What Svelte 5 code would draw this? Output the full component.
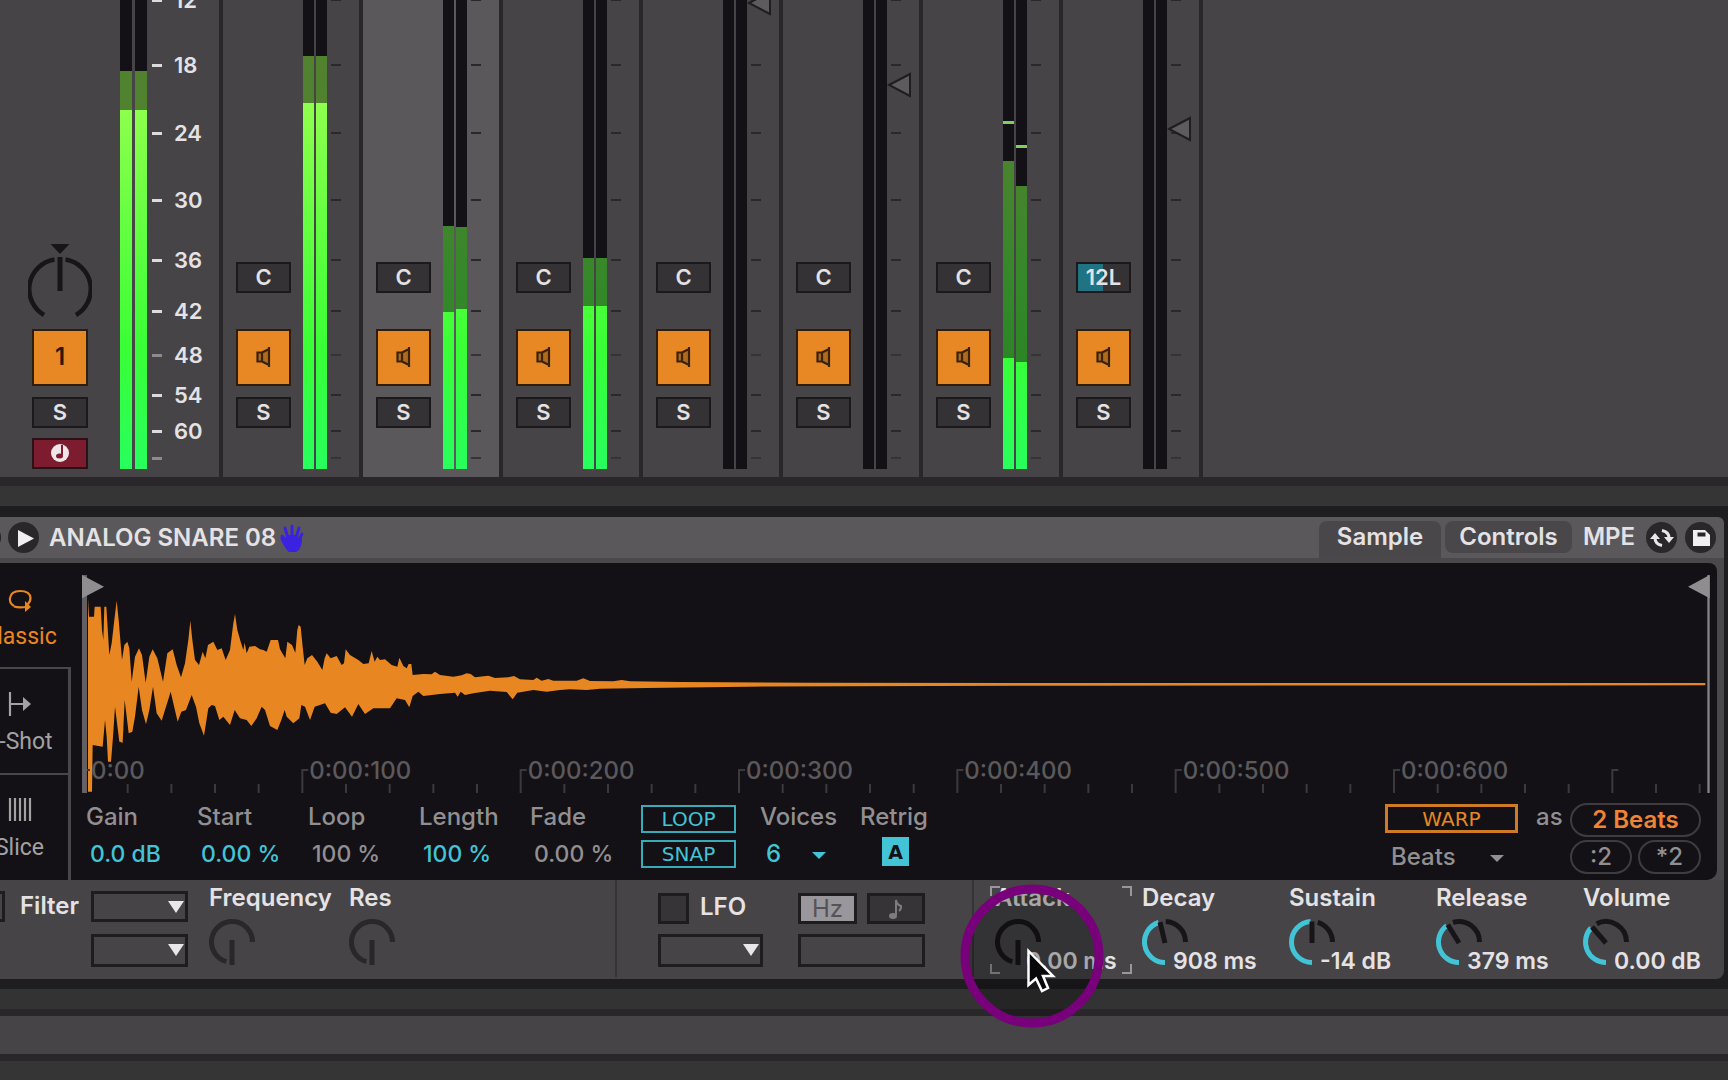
<script>
  const scale = [
    { db: '12', span: 65 },
    { db: '18', span: 68 },
    { db: '24', span: 67 },
    { db: '30', span: 60 },
    { db: '36', span: 51 },
    { db: '42', span: 44 },
    { db: '48', span: 40, soft: true },
    { db: '54', span: 36 },
    { db: '60', span: 27 },
    { db: '', span: 19, soft: true }
  ];

  // Each bar lists where its peak, its held level and its live level begin.
  const off = { peak: null, hold: 469, live: 469 };
  const mainBars = [
    { peak: null, hold: 71, live: 110 },
    { peak: null, hold: 71, live: 110 }
  ];
  const tracks = [
    { pan: 'C', bars: [{ hold: 56, live: 103 }, { hold: 56, live: 103 }] },
    { pan: 'C', selected: true, bars: [{ hold: 226, live: 312 }, { hold: 227, live: 309 }] },
    { pan: 'C', bars: [{ hold: 258, live: 306 }, { hold: 258, live: 306 }] },
    { pan: 'C', bars: [off, off], fader: 3 },
    { pan: 'C', bars: [off, off], fader: 85 },
    { pan: 'C', bars: [{ peak: 121, hold: 161, live: 358 }, { peak: 145, hold: 186, live: 362 }] },
    { pan: '12L', bars: [off, off], fader: 129 }
  ];

  const params = [
    { name: 'Gain', value: '0.0 dB', on: true },
    { name: 'Start', value: '0.00 %', on: true },
    { name: 'Loop', value: '100 %' },
    { name: 'Length', value: '100 %', on: true },
    { name: 'Fade', value: '0.00 %' }
  ];

  const dials = [
    { name: 'Attack', value: '0.00 ms', angle: -180, focus: true },
    { name: 'Decay', value: '908 ms', angle: -14 },
    { name: 'Sustain', value: '-14 dB', angle: 0 },
    { name: 'Release', value: '379 ms', angle: -33 },
    { name: 'Volume', value: '0.00 dB', angle: -43 }
  ];

  const times = ['0:00', '0:00:100', '0:00:200', '0:00:300', '0:00:400', '0:00:500', '0:00:600'];
  const ticks = Array.from({ length: 38 }, (_, i) => ({ x: 12 + i * 131, major: i % 5 === 0 }));

  const upper =
    '24,25 27,80 42,80 44,50 62,50 66,120 70,150 73,50 79,50 88,195 95,160 103,90 110,32 116,90 126,210 133,165 142,155 148,175 155,275 165,200 177,175 186,195 197,278 208,200 218,178 232,205 249,275 262,190 278,178 290,225 303,262 315,220 325,150 331,92 337,150 345,210 357,225 368,185 376,205 384,165 400,155 412,180 425,175 437,210 450,180 460,100 465,72 472,120 482,155 490,180 494,158 500,190 508,170 525,168 540,178 550,180 560,185 572,150 594,150 600,178 616,205 622,155 636,165 646,188 652,120 656,105 662,110 668,170 674,225 682,205 696,195 712,215 727,240 734,205 740,190 752,205 770,198 785,225 792,220 797,178 810,195 835,210 850,222 866,220 875,183 884,215 892,200 900,210 915,208 935,225 952,230 958,203 970,228 980,235 986,222 994,222 998,255 1030,252 1055,253 1065,245 1080,255 1120,260 1145,256 1160,250 1172,252 1185,262 1225,257 1245,264 1285,262 1302,258 1320,268 1360,270 1370,263 1385,272 1405,267 1420,272 1490,272 1510,265 1530,273 1600,274 1625,270 1650,274 1800,276 2200,278 3000,279 4876,279';
  const lower =
    '24,605 36,605 38,465 68,470 75,390 80,440 84,515 93,515 99,440 105,350 118,455 128,458 134,330 146,430 157,425 165,380 176,290 186,360 198,403 208,360 219,290 230,370 245,392 258,350 272,305 280,340 293,395 304,365 318,360 335,315 348,350 358,400 372,437 385,355 395,345 405,348 418,390 430,380 450,405 464,360 480,385 500,390 514,408 530,385 545,350 555,360 570,408 592,420 604,390 614,360 620,380 640,400 658,385 664,345 675,350 690,390 704,350 735,340 752,368 770,372 795,352 816,380 835,342 855,372 880,355 930,355 950,325 975,330 988,352 998,318 1015,305 1030,318 1080,312 1125,308 1133,320 1142,305 1155,315 1180,310 1230,302 1280,306 1298,328 1312,308 1360,300 1400,305 1440,300 1470,298 1520,300 1560,296 1700,294 2000,290 3000,287 4876,286';
  const wave = upper + ' ' + lower.split(' ').reverse().join(' ');

  const rim = (deg) => {
    const a = (deg * Math.PI) / 180;
    return `${(24 + 20.5 * Math.sin(a)).toFixed(2)} ${(24 - 20.5 * Math.cos(a)).toFixed(2)}`;
  };
  const arc = (from, to) => `M${rim(from)}A20.5 20.5 0 ${to - from > 180 ? 1 : 0} 1 ${rim(to)}`;
</script>

{#snippet meter(bars)}
  <div class="meter">
    {#each bars as b}
      <div class="bar">
        {#if b.peak}<i class="peak" style:top="{b.peak}px"></i>{/if}
        <i class="hold" style:height="{b.live - b.hold}px" style:background-position-y="{-b.hold}px"></i>
        <i class="live" style:height="{469 - b.live}px"></i>
      </div>
    {/each}
  </div>
{/snippet}

{#snippet ruler(labels)}
  <ul class="scale" class:labels>
    {#each scale as s}
      <li style:height="{s.span}px"><i class:soft={s.soft}></i>{#if labels}<span>{s.db}</span>{/if}</li>
    {/each}
  </ul>
{/snippet}

{#snippet knob(angle, faint)}
  <svg class="knob" class:faint viewBox="0 0 48 48" aria-hidden="true">
    {#if angle === -180}
      <path d={arc(-164, 90)} />
      <path d="M24 22V47" />
    {:else}
      <path d={arc(angle + 16, 90)} />
      <path class="lit" d={arc(-180, angle - 4)} />
      <path d="M24 25L{rim(angle)}" />
    {/if}
  </svg>
{/snippet}

<main>
  <section class="mixer" aria-label="Mixer">
    <div class="strip main">
      <div class="buttons">
        <svg class="pan-dial" viewBox="0 0 64 80" aria-hidden="true">
          <path d="M22.500 4H41.500L32 14Z" fill="#171519" />
          <path d="M16 75A30 30 0 0 1 26.500 19.500M37.500 19.500A30 30 0 0 1 48 75" fill="none" stroke="#171519" stroke-width="4.500" />
          <path d="M32 17V51" stroke="#171519" stroke-width="5" />
        </svg>
        <button class="active">1</button>
        <button class="solo">S</button>
        <button class="arm" aria-label="Record arm">
          <svg viewBox="0 0 20 20"><circle cx="10" cy="10" r="9" fill="#efe6e8" /><path d="M12 2V12" stroke="#7d1c2e" stroke-width="2" /><ellipse cx="9.500" cy="13" rx="3.500" ry="2.500" fill="#7d1c2e" /></svg>
        </button>
      </div>
      {@render meter(mainBars)}
      {@render ruler(true)}
    </div>
    {#each tracks as t}
      <div class="strip" class:selected={t.selected}>
        <div class="buttons">
          <button class="pan" class:left={t.pan !== 'C'}>{t.pan}</button>
          <button class="active" aria-label="Track on">
            <svg viewBox="0 0 20 22"><path d="M3 6.500H8L15 2V20L8 15.500H3Z" fill="#b06a1e" /><path d="M8 6.500H3.500V15.500H8ZM8 6.500V15.500M8 6.500L14 3.500M8 15.500L14 18.500M15 1V21" fill="none" stroke="#3a2208" stroke-width="2.200" /></svg>
          </button>
          <button class="solo">S</button>
        </div>
        {@render meter(t.bars)}
        {@render ruler(false)}
        {#if t.fader}
          <svg class="fader" style:top="{t.fader - 14}px" viewBox="0 0 26 28" aria-hidden="true"><path d="M2 14L23 3V25Z" fill="#5d5b5e" stroke="#1f1d20" stroke-width="2" /></svg>
        {/if}
      </div>
    {/each}
    <div class="empty"></div>
  </section>

  <div class="divider"></div>

  <section class="device" aria-label="Simpler">
    <header>
      <span class="dot"></span>
      <button class="round" aria-label="Play"><svg viewBox="0 0 32 32"><path d="M10 8V25L26 16.500Z" fill="#f1f0f1" /></svg></button>
      <h1>ANALOG SNARE 08</h1>
      <svg class="hand" viewBox="0 0 26 30" aria-hidden="true"><path d="M7 17L3 13M9 15L6 5M13 14V3M17 15L20 5M19 18L23 11" stroke="#3a22e0" stroke-width="3" stroke-linecap="round" /><path d="M1 15Q4 13 7 17L8 12H18L20 16L23 12L23 19Q21 28 17 29H10Q6 26 1 15Z" fill="#3a22e0" /></svg>
      <nav>
        <button class="tab current">Sample</button>
        <button class="tab">Controls</button>
        <button class="tab plain">MPE</button>
      </nav>
      <button class="round swap" aria-label="Hot-swap"><svg viewBox="0 0 32 32"><path d="M9 16Q9 22 16 23.500M23 16Q23 10 16 8.500" fill="none" stroke="#e9e8e9" stroke-width="3" /><path d="M4 17L9 11L14 17ZM18 15L23 21L28 15Z" fill="#e9e8e9" /></svg></button>
      <button class="round" aria-label="Save preset"><svg viewBox="0 0 32 32"><path d="M8 8H20L25 13V24H8Z" fill="#f1f0f1" /><path d="M12.500 10.500H20.500V14.500H12.500Z" fill="#29272a" /></svg></button>
    </header>

    <div class="sampler">
      <div class="modes">
        <button class="mode chosen">
          <svg viewBox="0 0 26 26"><path d="M7 19Q2 16 3 11Q4 4 13 4Q23 4 23.500 11Q23.500 15 20 18M7 19.500Q11 21 20 20" fill="none" stroke="currentColor" stroke-width="2.200" /><path d="M18 14L24 20L18 25Z" fill="currentColor" /></svg>
          Classic
        </button>
        <button class="mode">
          <svg viewBox="0 0 26 26"><path d="M3 1V25M3 13H18" stroke="currentColor" stroke-width="2.200" /><path d="M16 6L24 13L16 20Z" fill="currentColor" /></svg>
          1-Shot
        </button>
        <button class="mode">
          <svg viewBox="0 0 26 26"><path d="M3 1V24M8 1V24M13 1V24M18 1V24M23 1V24" stroke="currentColor" stroke-width="2.200" /></svg>
          Slice
        </button>
      </div>

      <div class="editor">
        <div class="scope">
          <svg class="wave" viewBox="6 -45 4884 654" preserveAspectRatio="none" aria-hidden="true">
            <polygon points={wave} fill="#e88722" />
            {#each ticks as t}
              <path d={t.major ? `M${t.x} 609V540H${t.x + 18}` : `M${t.x} 609V582`} fill="none" stroke="#3b393c" stroke-width="6" />
            {/each}
            <path d="M6 -45H21V609H6Z" fill="#6a686b" fill-opacity="0.9" />
            <path d="M6 -45L72 -10L6 25Z" fill="#8f8d90" />
            <path d="M4882 -45H4889V609H4882Z" fill="#858386" />
            <path d="M4889 -45L4824 -10L4889 25Z" fill="#8f8d90" />
          </svg>
          <ol class="times">
            {#each times as t}<li>{t}</li>{/each}
          </ol>
        </div>

        <div class="controls">
          {#each params as p}
            <label class="param">{p.name}<input class:on={p.on} value={p.value} /></label>
          {/each}
          <div class="toggles">
            <button>LOOP</button>
            <button>SNAP</button>
          </div>
          <label class="param voices">Voices
            <span class="menu on"><select><option>6</option></select></span>
          </label>
          <div class="param retrig"><span>Retrig</span><button aria-label="Retrigger">A</button></div>
          <div class="warp">
            <button class="warp-on">WARP</button>
            <span class="menu"><select aria-label="Warp mode"><option>Beats</option></select></span>
          </div>
          <span class="as">as</span>
          <div class="lengths">
            <button class="beats">2 Beats</button>
            <button>:2</button>
            <button>*2</button>
          </div>
        </div>
      </div>
    </div>

    <div class="lower">
      <div class="filter">
        <input id="filter" type="checkbox" />
        <label for="filter">Filter</label>
        <span class="drop"><select aria-label="Filter type"></select></span>
        <span class="drop second"><select aria-label="Filter slope"></select></span>
      </div>
      <div class="knobs">
        <div class="plain-dial"><span>Frequency</span>{@render knob(-180, true)}</div>
        <div class="plain-dial"><span>Res</span>{@render knob(-180, true)}</div>
      </div>
      <div class="lfo">
        <div class="lfo-left">
          <input id="lfo" type="checkbox" />
          <label for="lfo">LFO</label>
          <span class="drop"><select aria-label="LFO shape"></select></span>
        </div>
        <div class="lfo-right">
          <button class="hz">Hz</button>
          <button class="sync" aria-label="Sync"><svg viewBox="0 0 16 22"><path d="M8 17V2Q9 7 13 8Q13.500 11 11 13" fill="none" stroke="currentColor" stroke-width="2" /><ellipse cx="5" cy="18" rx="4" ry="3" fill="currentColor" /></svg></button>
          <input class="rate" type="text" aria-label="LFO rate" />
        </div>
      </div>
      <div class="envelope">
        {#each dials as d}
          <label class="dial" class:focus={d.focus}>
            <span>{d.name}</span>
            <span class="row">{@render knob(d.angle, false)}<input value={d.value} /></span>
            {#if d.focus}
              <svg class="corners" viewBox="0 0 142 88" aria-hidden="true"><path d="M1 10V1H10M132 1H141V10M141 78V87H132M10 87H1V78" fill="none" stroke="#99979a" stroke-width="2" /></svg>
            {/if}
          </label>
        {/each}
      </div>
    </div>
  </section>

  <div class="gutter"></div>
  <footer></footer>
  <div class="tail"></div>

  <svg class="pointer" viewBox="0 0 144 144" aria-hidden="true">
    <circle cx="72" cy="72" r="67" fill="#000" fill-opacity="0.26" stroke="#78007a" stroke-width="9" />
    <path d="M68.500 67V101L76 94.500L82 107L88 104L83 92H93Z" fill="#08070a" stroke="#fff" stroke-width="2.500" />
  </svg>
</main>

<style>
  :global(body) { background: #363536; }
  main {
    position: relative;
    overflow: hidden;
    min-height: 100vh;
    font: 500 24px/28px Inter, 'Liberation Sans', sans-serif;
    color: #e4e2e4;
    background: #363536;
    display: flex;
    flex-direction: column;
  }
  button, input, select {
    font: inherit;
    color: inherit;
    margin: 0;
    padding: 0;
    border: 0;
    border-radius: 0;
    background: none;
    appearance: none;
    box-sizing: border-box;
  }
  button { display: flex; align-items: center; justify-content: center; }
  ul, ol { list-style: none; margin: 0; padding: 0; }

  .mixer { display: flex; background: #464447; overflow: hidden; height: 477px; font-size: 22px; font-weight: 600; }
  .strip {
    position: relative;
    display: flex;
    flex: none;
    box-sizing: border-box;
    width: 140px;
    border-left: 4px solid #29272a;
    padding-left: 13px;
  }
  .strip.main { width: 219px; padding-left: 32px; border-left: 0; }
  .selected { background: #5b585c; }
  .empty { flex: 1; border-left: 4px solid #29272a; }
  .buttons { width: 55px; padding-top: 262px; flex: none; margin-right: 12px; }
  .main .buttons { width: 56px; margin-right: 32px; padding-top: 240px; }
  .pan-dial { display: block; width: 64px; height: 80px; margin: 0 0 9px -4px; }
  .buttons button { width: 100%; height: 31px; border: 2px solid #1b191c; background: #343235; padding-bottom: 1px; }
  .buttons .pan { margin-bottom: 36px; }
  .buttons .pan.left { background: linear-gradient(90deg, #1f7382 50%, #343235 50%); }
  .buttons .active { height: 57px; background: #e78824; border-color: #2e1c0c; color: #2a1808; font-size: 24px; margin-bottom: 11px; }
  .active svg { width: 20px; height: 22px; }
  .buttons .arm { margin-top: 10px; background: #7d1c2e; border-color: #2b1218; }
  .arm svg { width: 20px; height: 20px; }

  .meter { display: flex; gap: 2px; width: 24px; height: 469px; flex: none; }
  .main .meter { gap: 3px; width: 27px; }
  .bar { position: relative; flex: 1; display: flex; flex-direction: column; justify-content: flex-end; background: #131115; }
  .hold { background: linear-gradient(#548030, #4f822e 28%, #35882a 60%, #20821e) top / 100% 469px; }
  .live { background: linear-gradient(#a0ff58, #8cff4c 24%, #3aff36 74%, #28ff5e) bottom / 100% 469px; }
  .peak { position: absolute; left: 0; right: 0; height: 3px; background: #7fd05c; }

  .scale { margin-left: 4px; width: 10px; }
  .scale li { display: flex; }
  .scale i { flex: none; width: 10px; height: 2px; margin-top: -1px; background: #2a282b; }
  .scale .soft { background: #353336; }
  .labels { margin-left: 5px; width: 60px; }
  .labels i { background: #dddbdd; height: 3px; }
  .labels .soft { background: #8d8b8e; }
  .labels span { margin: -14px 0 0 12px; height: 28px; }
  .fader { position: absolute; left: 104px; width: 26px; height: 28px; }

  .divider { height: 20px; border-top: 9px solid #29272b; border-bottom: 11px solid #1e1d20; background: #343534; }
  .device { background: #1e1d20; padding: 0 4px 10px 0; }
  header {
    display: flex;
    align-items: center;
    height: 41px;
    background: #5b585c;
    border-radius: 0 6px 0 0;
    font-weight: 600;
  }
  .dot { width: 31px; height: 31px; border-radius: 50%; background: #232124; margin-left: -30px; }
  .round { flex: none; width: 31px; height: 31px; border-radius: 50%; background: #29272a; margin-left: 7px; }
  .round svg { width: 32px; height: 32px; flex: none; }
  h1 { font: inherit; margin: 0 0 0 10px; }
  .hand { width: 26px; height: 30px; margin-left: 3px; }
  nav { display: flex; align-self: stretch; margin-left: auto; }
  .tab { height: 32px; margin-top: 4px; border-radius: 8px; background: #49474a; width: 127px; }
  .tab.current { width: 122px; height: 37px; border-radius: 8px 8px 0 0; margin-right: 4px; padding-bottom: 5px; }
  .tab.plain { background: none; width: 74px; }
  .swap { margin-left: 0; }
  .swap + .round { margin: 0 8px; }

  .sampler { display: flex; background: #4a484b; border: solid #4a484b; border-width: 5px 7px 0 0; height: 317px; }
  .modes { display: flex; flex-direction: column; width: 100px; margin-left: -29px; flex: none; background: #131115; font: 400 23px/26px Roboto, 'Liberation Sans', sans-serif; }
  .mode {
    box-sizing: border-box;
    flex-direction: column;
    justify-content: flex-start;
    gap: 12px;
    height: 106px;
    color: #a3a1a4;
    border: solid #49474a;
    border-width: 2px 3px 0 0;
    padding-top: 22px;
  }
  .mode svg { width: 26px; height: 26px; }
  .mode.chosen { color: #e88722; border-color: transparent; height: 104px; gap: 11px; }
  .mode:last-child { flex: 1; }
  .editor { flex: 1; min-width: 0; background: #131115; border-radius: 0 8px 10px 0; padding: 12px 7px 0 11px; display: flex; flex-direction: column; }
  .scope { position: relative; display: flex; flex-direction: column; justify-content: flex-end; height: 218px; }
  .wave { position: absolute; inset: 0; width: 100%; height: 100%; }
  .times { position: relative; display: grid; grid-template-columns: repeat(7, 655fr) 299fr; padding-bottom: 8px; color: #5b595c; line-height: 28px; }
  .times li { padding-left: 9px; }

  .controls { display: flex; padding: 10px 9px 0 4px; color: #918f92; flex: 1; }
  .param { width: 111px; display: flex; flex-direction: column; gap: 9px; }
  .param input { width: 100%; height: 28px; padding-left: 4px; font-size: 23px; }
  .on { color: #42c3d6; }
  .toggles { width: 95px; display: flex; flex-direction: column; gap: 7px; padding-top: 2px; font: 400 20px/20px 'DejaVu Sans', sans-serif; color: #42c3d6; }
  .toggles button { height: 28px; border: 2px solid #3aa9b8; }
  .voices { width: 100px; margin-left: 24px; }
  .menu { position: relative; display: block; width: 64px; padding-left: 6px; }
  .menu select { width: 100%; height: 28px; display: block; }
  .menu::after, .drop::after {
    content: '';
    position: absolute;
    right: 4px;
    top: 12px;
    border: 7px solid transparent;
    border-top-color: currentColor;
    border-bottom: 0;
    pointer-events: none;
  }
  .retrig button { width: 27px; height: 29px; margin: -3px 0 0 22px; background: #42c3d6; color: #131115; font: 700 19px/20px 'DejaVu Sans', sans-serif; }
  .warp { width: 133px; margin-left: auto; padding-top: 1px; }
  .warp-on { width: 100%; height: 29px; border: 3px solid #cf7b26; color: #e88722; font: 400 20px/20px 'DejaVu Sans', sans-serif; }
  .warp .menu { width: 117px; margin-top: 10px; }
  .as { width: 34px; padding-left: 18px; }
  .lengths { display: grid; grid-template-columns: 62px 63px; gap: 3px 6px; align-content: start; }
  .lengths button { height: 34px; border: 2px solid #3e3c3f; border-radius: 17px; }
  .lengths .beats { grid-column: span 2; color: #ee8434; font-weight: 600; }

  .lower { display: flex; background: #464447; height: 99px; border-radius: 0 0 8px 0; font-weight: 600; }
  .filter { display: grid; grid-template-columns: 46px 71px 97px; grid-template-rows: 31px 33px; gap: 12px 0; margin-left: -26px; padding-top: 11px; flex: none; }
  .filter label { line-height: 30px; }
  input[type='checkbox'] { width: 31px; height: 31px; border: 3px solid #1e1c1f; background: #363437; }
  .filter input[type='checkbox'] { background: none; }
  .drop { position: relative; display: block; }
  .drop select { display: block; width: 100%; height: 100%; border: 3px solid #1e1c1f; }
  .drop::after { border-width: 12px 8px 0; top: 10px; color: #e9e8e9; }
  .second { grid-column: 3; }
  .knobs { display: flex; padding: 4px 0 0 21px; flex: 0 0 427px; box-sizing: border-box; }
  .plain-dial { width: 140px; display: flex; flex-direction: column; gap: 6px; }
  .knob { width: 48px; height: 48px; flex: none; margin-left: -1px; }
  .knob path { fill: none; stroke: #171519; stroke-width: 5; }
  .knob.faint path { stroke: #29272a; }
  .knob .lit { stroke: #42c3d6; }
  .lfo { display: flex; gap: 35px; width: 359px; box-sizing: border-box; border: solid #353336; border-width: 0 2px; padding: 13px 0 0 41px; flex: none; height: 97px; }
  .lfo-left { display: grid; grid-template-columns: 42px 63px; grid-template-rows: 31px 33px; gap: 10px 0; align-content: start; }
  .lfo-left .drop { grid-column: span 2; }
  .lfo-right { display: grid; grid-template-columns: 59px 58px; grid-template-rows: 31px 33px; gap: 10px; align-content: start; }
  .lfo-right > * { border: 3px solid #1e1c1f; }
  .hz { background: #99979b; color: #555357; font-weight: 400; }
  .sync { background: #363437; color: #7d7b7e; }
  .sync svg { width: 16px; height: 22px; }
  .rate { grid-column: span 2; width: 100%; }
  .envelope { display: flex; padding: 4px 0 0 21px; flex: 1; min-width: 0; }
  .dial { position: relative; display: flex; flex-direction: column; flex: 0 0 147px; gap: 6px; }
  .row { display: flex; }
  .row input { width: 110px; height: 28px; margin: 29px 0 0 -16px; position: relative; font-size: 23px; }
  .corners { position: absolute; left: -5px; top: 2px; width: 142px; height: 88px; }

  .gutter { height: 20px; background: #333; border-bottom: 7px solid #29272a; }
  footer { height: 38px; background: #464447; border-bottom: 7px solid #29272a; }
  .tail { flex: 1; background: #363536; }
  .pointer { position: absolute; left: 960px; top: 884px; width: 144px; height: 144px; pointer-events: none; }
</style>
